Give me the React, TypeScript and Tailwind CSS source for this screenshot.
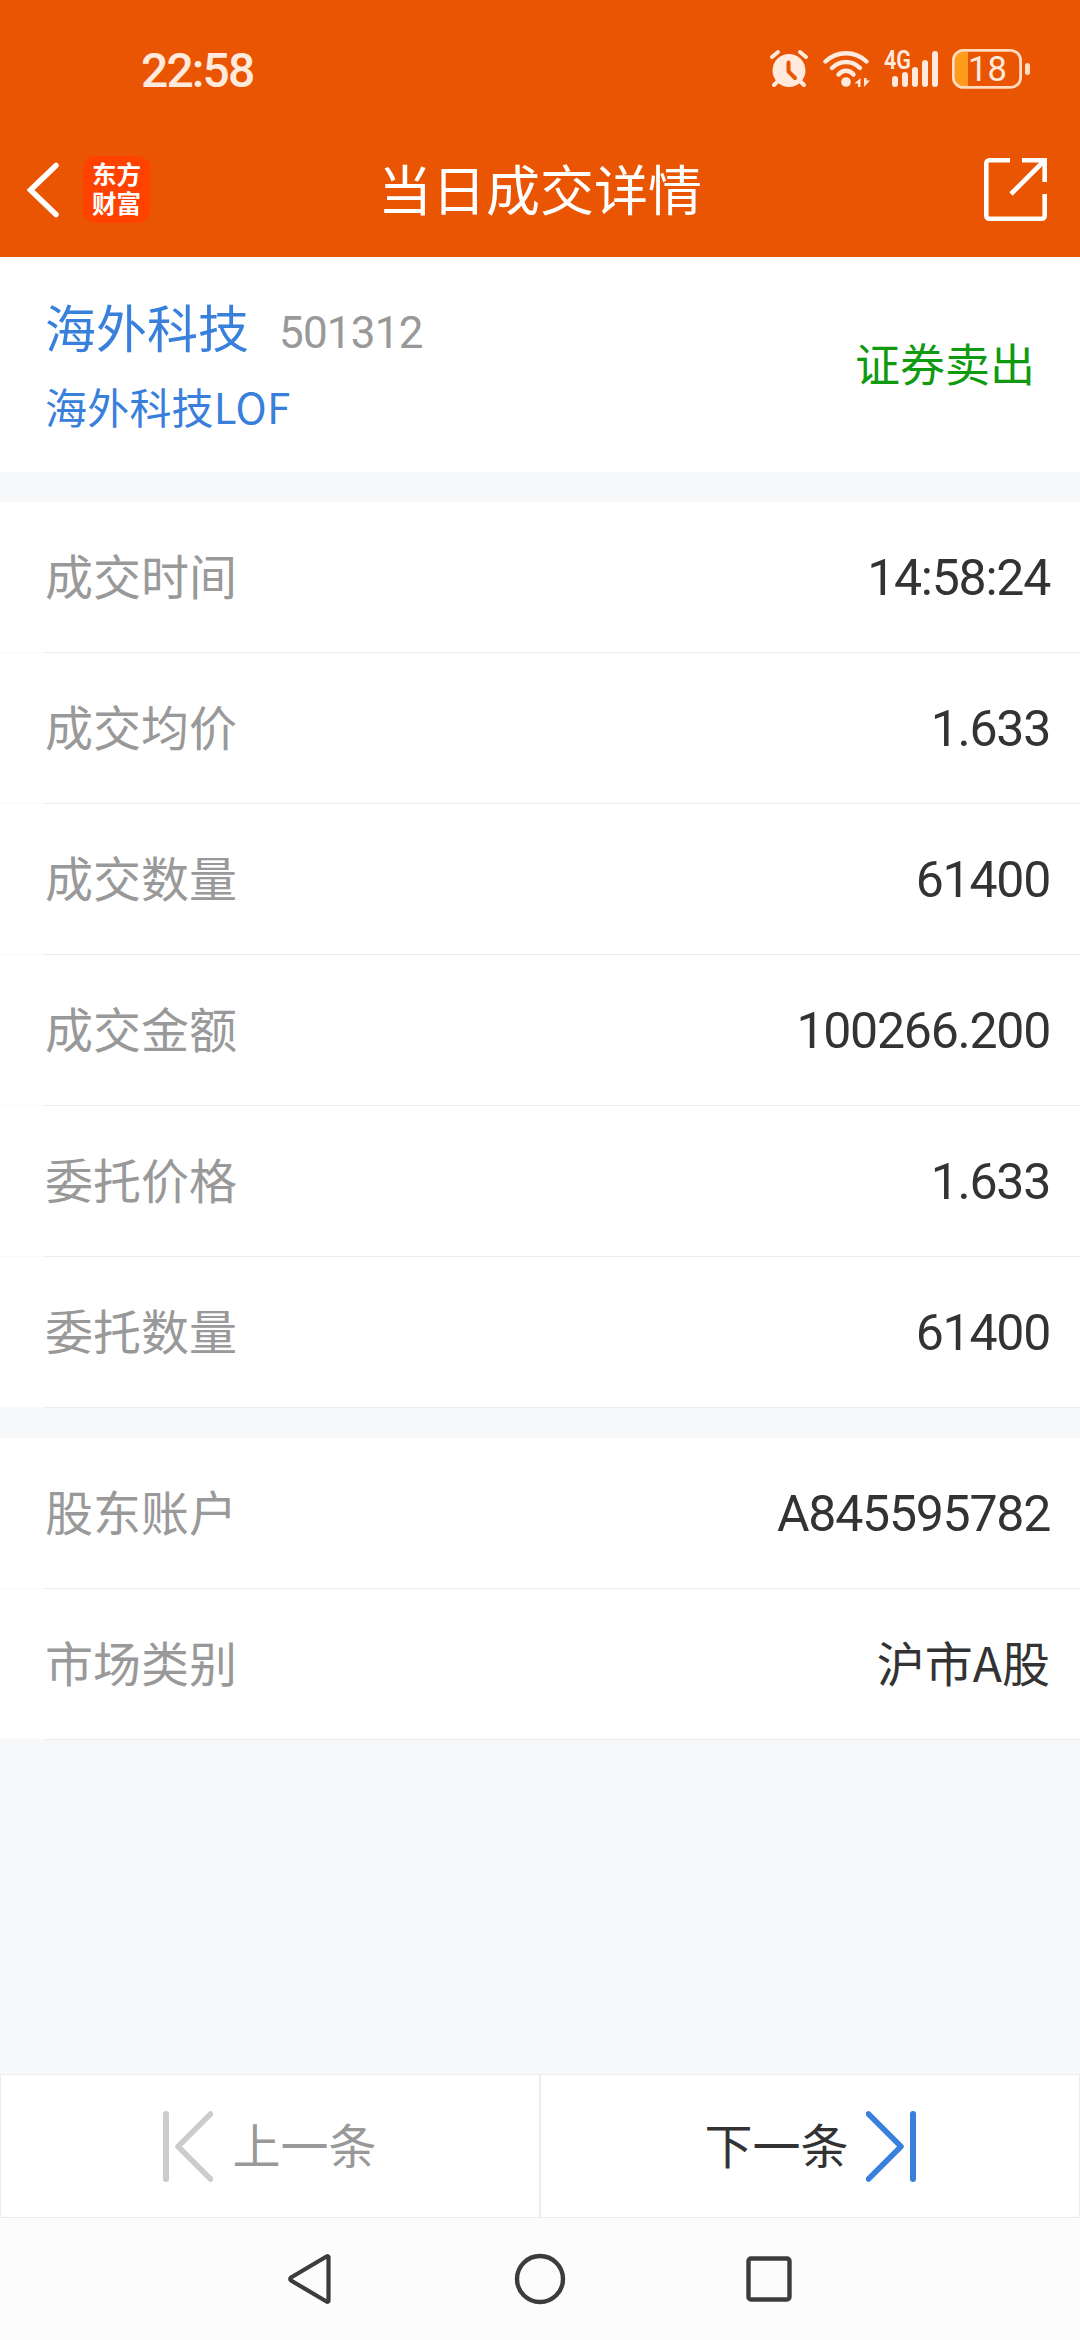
import React from 'react';

interface RowProps {
  label: string;
  value: string;
  cjk?: boolean;
}

const tradeRows: RowProps[] = [
  { label: '成交时间', value: '14:58:24' },
  { label: '成交均价', value: '1.633' },
  { label: '成交数量', value: '61400' },
  { label: '成交金额', value: '100266.200' },
  { label: '委托价格', value: '1.633' },
  { label: '委托数量', value: '61400' },
];

const accountRows: RowProps[] = [
  { label: '股东账户', value: 'A845595782' },
  { label: '市场类别', value: '沪市A股', cjk: true },
];

const StatusBar: React.FC = () => (
  <div className="flex h-[122px] items-start justify-between pl-[141px] pr-[50px] text-[#ffeadd]">
    <div className="mt-[48px] font-['Roboto','Noto_Sans_CJK_SC',sans-serif] text-[48px] leading-[46px] font-medium tracking-[-1.9px]">
      22:58
    </div>

    <div className="mt-[49px] flex h-10">
      {/* 鬧鐘 */}
      <svg className="mr-3.5 h-10 w-10" viewBox="0 0 40 40" fill="none" stroke="currentColor" strokeLinecap="round">
        <path d="M3 8l6-5M37 8l-6-5" strokeWidth="4" />
        <path d="M9 32l-4 4M31 32l4 4" strokeWidth="4" />
        <circle cx="20" cy="21.500" r="16.500" fill="currentColor" stroke="none" />
        <path d="M19.500 13.500v9l6.500 6.500" stroke="#e95502" strokeWidth="4" />
      </svg>

      {/* Wi-Fi */}
      <svg className="mr-3.5 h-10 w-[47px]" viewBox="0 0 47 40" fill="none" stroke="currentColor" strokeWidth="4.400" strokeLinecap="round">
        <path d="M2.500 12.500C14 1.500 32 1.500 43.500 12.500" />
        <path d="M9 19C17 11 29 11 37 19" />
        <path d="M15.500 25.500C20 20.500 26 20.500 30.500 25.500" />
        <circle cx="23" cy="33" r="4.800" fill="currentColor" stroke="none" />
        <path d="M31.500 34.500l6-5.500v9h-2.500v-3.500zM47 31.500l-6 6.500v-9h2.500v2.500z" fill="currentColor" stroke="none" />
      </svg>

      {/* 訊號 */}
      <svg className="mr-3.5 h-10 w-[54px] overflow-visible" viewBox="0 0 54 40" fill="currentColor">
        <text x="0" y="20" fontSize="25" fontWeight="600" textLength="27" lengthAdjust="spacingAndGlyphs" fontFamily="Roboto, sans-serif">
          4G
        </text>
        <rect x="8" y="27" width="6" height="11" rx="3" />
        <rect x="18" y="23" width="6" height="15" rx="3" />
        <rect x="28" y="18" width="6" height="20" rx="3" />
        <rect x="38" y="11" width="6" height="27" rx="3" />
        <rect x="48" y="2" width="6" height="36" rx="3" />
      </svg>

      {/* 電量 */}
      <svg className="h-10 w-[78px] overflow-visible" viewBox="0 0 78 40">
        <path d="M16 3h-5.500a7.500 7.500 0 0 0-7.500 7.500v19a7.500 7.500 0 0 0 7.500 7.500H16z" fill="#ff9c1b" />
        <rect x="1.400" y="1.400" width="67.200" height="37" rx="10" fill="none" stroke="#ffdcc0" strokeWidth="2.800" />
        <rect x="73" y="14" width="5" height="12" rx="2.500" fill="#ffdcc0" />
        <text x="16" y="32" fontSize="34.500" textLength="39" fontFamily="Roboto, sans-serif" fill="currentColor">
          18
        </text>
      </svg>
    </div>
  </div>
);

const TitleBar: React.FC = () => (
  <div className="grid h-[135px] grid-cols-[1fr_auto_1fr] text-white">
    <div className="flex items-center pl-[27px]">
      <svg className="h-[56px] w-[32px]" viewBox="0 0 32 56" fill="none" stroke="currentColor" strokeWidth="5.500" strokeLinecap="round">
        <path d="M29 3.500L3.500 28L29 52.500" />
      </svg>
      <div className="ml-6 h-[67px] w-[67px] rounded-[13px] bg-[#ff4200] pt-[3px] text-center font-['Noto_Sans_CJK_SC',sans-serif] text-[24.5px] leading-[29px] font-bold">
        东方
        <br />
        财富
      </div>
    </div>
    <h1 className="mt-[26px] font-['Noto_Sans_CJK_SC',sans-serif] text-[54px] leading-[80px] font-normal">当日成交详情</h1>
    <div className="flex items-center justify-end pr-[33px]">
      <svg className="h-[63px] w-[63px]" viewBox="0 0 63 63" fill="none" stroke="currentColor" strokeWidth="4.600">
        <path d="M26 2.300H5.300a3 3 0 0 0-3 3v52.400a3 3 0 0 0 3 3h52.400a3 3 0 0 0 3-3V36" />
        <path d="M38 2.300h22.700V24M60 3L27 36" />
      </svg>
    </div>
  </div>
);

const DetailRow: React.FC<RowProps> = ({ label, value, cjk }) => (
  <div className="h-[151px] bg-white">
    <div className="flex h-[150px] items-center justify-between pr-[30px] pl-[45px]">
      <span className="mb-1.5 font-['Noto_Sans_CJK_SC',sans-serif] text-[48px] leading-[70px] text-[#999999]">{label}</span>
      {cjk ? (
        <span className="mb-1.5 font-['Noto_Sans_CJK_SC',sans-serif] text-[48px] leading-[70px] text-[#333333]">{value}</span>
      ) : (
        <span className="mt-0.5 font-['Roboto',sans-serif] text-[50px] leading-[70px] tracking-[-1.25px] text-[#333333]">
          {value}
        </span>
      )}
    </div>
    {/* 分隔線，左側留白 */}
    <div className="flex h-px">
      <div className="w-[45px] bg-[#f7f8fa]"></div>
      <div className="flex-1 bg-[#e9eaeb]"></div>
    </div>
  </div>
);

const App: React.FC = () => {
  return (
    <div className="flex h-[2340px] w-[1080px] flex-col overflow-hidden bg-[#f7f8fa] font-['Noto_Sans_CJK_SC',sans-serif]">
      <header className="bg-[#e95502]">
        <StatusBar />
        <TitleBar />
      </header>

      <section className="flex h-[215px] justify-between bg-white px-[45px]">
        <div className="pt-[31px] text-[#3880db]">
          <div className="flex items-baseline">
            <span className="text-[51px] leading-[76px]">海外科技</span>
            <span className="ml-[30px] font-['Roboto',sans-serif] text-[44px] tracking-[-0.8px] text-[#999999]">501312</span>
          </div>
          <div className="mt-2 text-[42px] leading-[64px] tracking-[0.2px]">海外科技LOF</div>
        </div>
        <div className="mt-[73px] text-[45px] leading-[66px] text-[#109a10]">证券卖出</div>
      </section>

      <section className="mt-[30px]">
        {tradeRows.map((row) => (
          <DetailRow key={row.label} {...row} />
        ))}
      </section>

      <section className="mt-[30px]">
        {accountRows.map((row) => (
          <DetailRow key={row.label} {...row} />
        ))}
      </section>

      <footer className="mt-auto">
        <div className="grid h-[144px] grid-cols-2 text-[48px] leading-[70px]">
          <button className="flex items-center justify-center gap-[19px] border border-[#ebecee] bg-white text-[#999999]">
            <svg className="h-[71px] w-[50px]" viewBox="0 0 50 71" fill="none" stroke="#cccccc" strokeLinecap="round" strokeLinejoin="round">
              <path d="M3 3v65" strokeWidth="6" />
              <path d="M47.500 3L15 35.500l32.500 32.500" strokeWidth="5.500" />
            </svg>
            <span className="mb-1.5">上一条</span>
          </button>
          <button className="flex items-center justify-center gap-[17px] border border-[#ebecee] bg-white text-[#333333]">
            <span className="mb-1.5">下一条</span>
            <svg className="h-[71px] w-[50px]" viewBox="0 0 50 71" fill="none" stroke="#3880db" strokeLinecap="round" strokeLinejoin="round">
              <path d="M47 3v65" strokeWidth="6" />
              <path d="M2.500 3L35 35.500L2.500 68" strokeWidth="5.500" />
            </svg>
          </button>
        </div>

        {/* 系統導覽列 */}
        <nav className="flex h-[122px] items-center justify-center gap-[177px] bg-[#fcfcfc]">
          <svg className="h-[52px] w-[52px]" viewBox="0 0 52 52" fill="none" stroke="#3c3c3c" strokeWidth="4.200" strokeLinejoin="round">
            <path d="M43.500 4v44a1.500 1.500 0 0 1-2 .500L6 27.500a1.800 1.800 0 0 1 0-3L41.500 3.500a1.500 1.500 0 0 1 2 .500z" />
          </svg>
          <svg className="h-[52px] w-[52px]" viewBox="0 0 52 52" fill="none" stroke="#3c3c3c" strokeWidth="4.400">
            <circle cx="26" cy="26" r="23" />
          </svg>
          <svg className="h-[52px] w-[52px]" viewBox="0 0 52 52" fill="none" stroke="#3c3c3c" strokeWidth="4.400">
            <rect x="5.500" y="5.500" width="41" height="41" rx="2.500" />
          </svg>
        </nav>
      </footer>
    </div>
  );
};

export default App;
